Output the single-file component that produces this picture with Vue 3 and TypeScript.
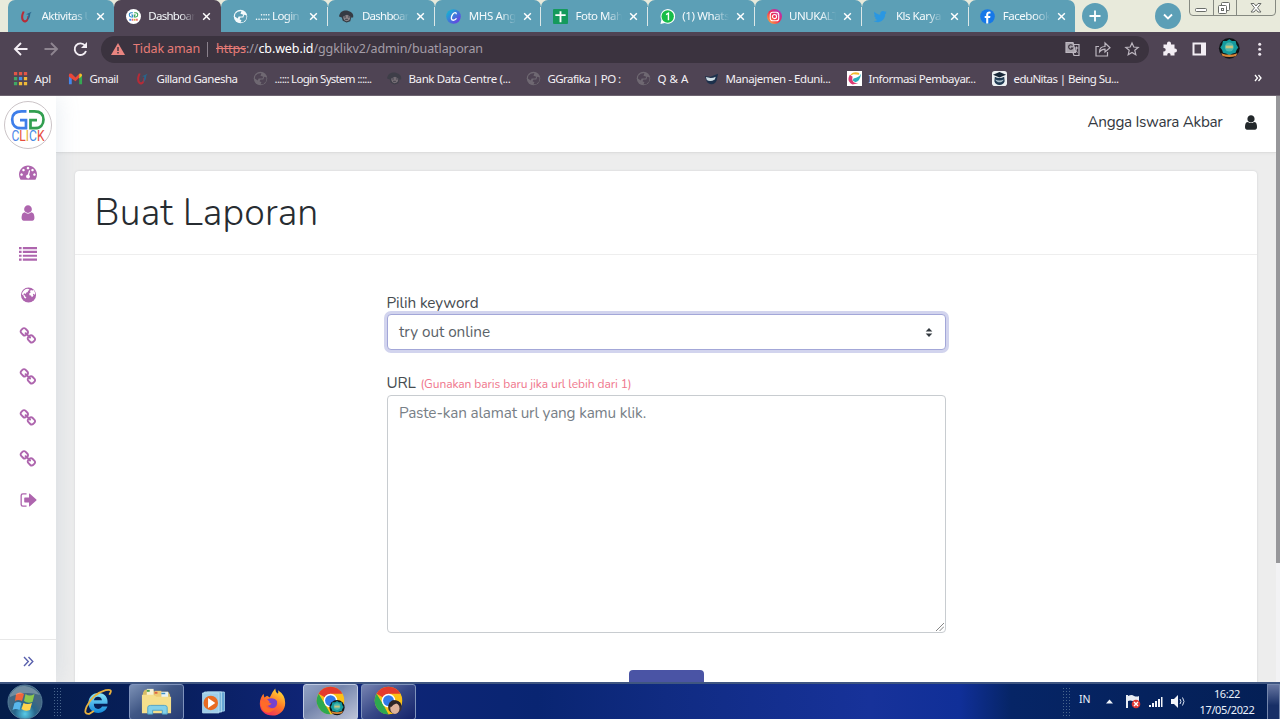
<script setup lang="ts">
interface Item { icon: string; label: string; width: number }

const globe = '<circle cx="8" cy="8" r="7.200" fill="currentColor"/><path d="M2.500 5l2.500-2 4-1-1 3 3 1-1 2-4 0-1 2-3-2zM8 9l3 0 1-3 2.500 1-.5 4-3 3-3 0 1-2-2-1z" fill="var(--hole)"/>'
const face = '<path d="M0 8C1 2 6 1 10 2c4 1 6 4 5 7l-2 0-1 4-4 1.500-4-2L3 9z" fill="#353b43"/><path d="M4.500 8l4-2 3.500 2c0 3-1 5-4 5-2 0-3.500-2-3.500-5z" fill="#8c8588"/><path d="M5.500 8.500h2M9.500 8.500h2M6.500 11h3" stroke="#353b43"/>'
const swirl = '<path d="M4 2.500C1 8 2 13.500 6 14.500c3 0 4.500-3 4.500-6.500L9 7.500c0 3-1.500 5-3 4.500C4 11 4 7 6 3z" fill="#b72b37"/><path d="M7.500 5.500l6-2.500-1.500 2c0 3-1 5.500-3 7l1-6z" fill="#28658d"/>'
const chrome = '<circle cx="16" cy="16" r="15" fill="#fbc116"/><path d="M16 16L3 8.500A15 15 0 0 1 29 8.500H16z" fill="#e33b2e"/><path d="M3 8.500L10 20l6 11A15 15 0 0 1 3 8.500z" fill="#2da94f"/><path d="M16 9h13A15 15 0 0 1 16 31l6-12z" fill="#fbc116"/><circle cx="16" cy="16" r="7.500" fill="#fff"/><circle cx="16" cy="16" r="5.900" fill="#317bea"/>'
const emblem = '<circle cx="12" cy="12" r="11.500" fill="#101517"/><path d="M12 2l3 2 4 0 1 4 2 3-2 3-1 3-4 1-3 2-3-2-4-1-1-3-2-3 2-3 1-4 4 0z" fill="#159b9d"/><circle cx="12" cy="10.500" r="5" fill="#4bb7ad"/><path d="M8 9h8v3H8z" fill="#c8c47c"/><path d="M3 17.500q9 3.500 18 0l-1.500 3q-7.500 2.500-15 0z" fill="#d88739"/>'

const art: Record<string, string> = {
  swirl, face, globe,
  gg: '<circle cx="8" cy="8" r="8" fill="#fff"/><path d="M7.300 4H5.500Q3.500 4 3.500 6.200T5.500 8.500h1.600V6.300H5.600" fill="none" stroke="#2789c9" stroke-width="1.100"/><path d="M8.700 4h1.800q2 0 2 2.200t-2 2.300H8.900V6.300h1.500" fill="none" stroke="#38a455" stroke-width="1.100"/><path d="M3.500 11.500h2.200" stroke="#4285f4" stroke-width="2"/><path d="M6.300 11.500h1.500M10.800 11.500h1.700" stroke="#e66" stroke-width="2"/><path d="M8.400 11.500h1.800" stroke="#dab03a" stroke-width="2"/>',
  canva: '<circle cx="8" cy="8" r="7.800" fill="url(#canva)"/><path d="M11 5.500c0-2.200-2-2.200-3.800 0-2.200 3-2 6.500.5 6.500q2 0 3.500-2" fill="none" stroke="#fff" stroke-width="1.400"/>',
  sheet: '<rect width="16" height="16" rx="1" fill="#159a5c"/><path d="M8 2.500v11.500M2.500 6.500h11" stroke="#fff" stroke-width="2"/>',
  whats: '<path d="M.5 16L1.500 11.500A7.800 7.800 0 1 1 5 14.900z" fill="#fff"/><circle cx="8.200" cy="8" r="6.600" fill="#17bd48"/><path d="M6.500 6L9 4.500V12" fill="none" stroke="#fff" stroke-width="1.500"/>',
  insta: '<circle cx="8" cy="8" r="8" fill="url(#insta)"/><rect x="3.500" y="3.500" width="9" height="9" rx="2.500" fill="none" stroke="#fff" stroke-width="1.200"/><circle cx="8" cy="8" r="2.200" fill="none" stroke="#fff" stroke-width="1.200"/><circle cx="10.700" cy="5.300" r=".6" fill="#fff"/>',
  bird: '<path d="M14.500 4.200L13 5.400c.1 5-3.500 8.600-8 8.600-1.700 0-3.200-.4-4.200-1.200 1.500 0 2.900-.4 4-1.200-1.200-.1-2.200-.9-2.600-2h1.200C2 9 1.200 7.800 1.200 6.600l1.200.3C1.100 5.900.8 4.200 1.600 3 3.200 4.900 5.300 6 7.800 6.100 7.300 3.800 8.800 2 10.700 2c.9 0 1.600.3 2.100.9l1.700-.6-1.100 1.600z" fill="#2a97e2"/>',
  fb: '<circle cx="8" cy="8" r="7.800" fill="#1678e8"/><path d="M8.800 15.500V9.600h2l.3-2.200H8.800V6c0-.8.300-1.100 1.200-1.100h1.200v-2Q7 2 6.600 5.400v2H5v2.200h1.600v5.900z" fill="#fff"/>',
  apps: '<path d="M1 1h3.500v3.500H1zM6.300 1h3.500v3.500H6.300zM11.600 1h3.500v3.500h-3.500z" fill="#e15647"/><path d="M1 6.300h3.500v3.500H1zM1 11.600h3.500v3.500H1z" fill="#40a865"/><path d="M6.300 6.300h3.500v3.500H6.300z" fill="#4390e8"/><path d="M11.600 6.300h3.500v3.500h-3.500zM6.300 11.600h3.500v3.500H6.300zM11.600 11.600h3.500v3.500h-3.500z" fill="#f0ba38"/>',
  gmail: '<path d="M1 4v10h3V7z" fill="#4487ed"/><path d="M12 7v7h3V4z" fill="#36a853"/><path d="M1 4q0-2 3-1l4 4 4-4v4l-4 4-7-5z" fill="#e94739"/><path d="M12 3q3-1 3 2l-3 3z" fill="#f7bd29"/>',
  mask: '<path d="M1 5.500l6 .5 8-3-1.500 7q-2 4.500-6 4-4-.5-5-4z" fill="#1c304b"/><path d="M2 6.500q6 2 10.500-.5l-1 3q-5 3-8.500.5z" fill="#cfdee4"/>',
  info: '<path d="M0 0h16v16H0z" fill="#fff"/><path d="M13 2Q6 0 3 5l4-1.500 6 .5z" fill="#f2b92d"/><path d="M3 4q-4 7 3 10.500l6-1.500Q4 13 6 6z" fill="#dc3972"/><path d="M7 8q6-1 8-5-1 8-6 9l-3-2z" fill="#2bb1bb"/>',
  edu: '<rect width="16" height="16" rx="3" fill="#eef1f3"/><path d="M1 4l7-3 7 3-7 3z" fill="#172637"/><path d="M3 6q5 3 10 0l.5 5q-1.500 4-5.500 4t-5.500-4z" fill="#213b53"/><path d="M3.500 9q4.500 2 9 0-1 3-4.500 3T3.500 9z" fill="#a9bdc9"/>',
}

const tabs: Item[] = [
  { icon: 'swirl', label: 'Aktivitas U', width: 51 }, { icon: 'gg', label: 'Dashboard', width: 53 },
  { icon: 'globe', label: '..:::: Login S', width: 52 }, { icon: 'face', label: 'Dashboard', width: 53 },
  { icon: 'canva', label: 'MHS Angg', width: 54 }, { icon: 'sheet', label: 'Foto Maha', width: 53 },
  { icon: 'whats', label: '(1) Whats', width: 47 }, { icon: 'insta', label: 'UNUKALT', width: 49 },
  { icon: 'bird', label: 'Kls Karya', width: 45 }, { icon: 'fb', label: 'Facebook', width: 48 },
]
const bookmarks: Item[] = [
  { icon: 'apps', label: 'Apl', width: 16.5 }, { icon: 'gmail', label: 'Gmail', width: 28.5 },
  { icon: 'swirl', label: 'Gilland Ganesha', width: 81 }, { icon: 'globe', label: '..:::: Login System ::::..', width: 97 },
  { icon: 'face', label: 'Bank Data Centre (...', width: 102 }, { icon: 'globe', label: 'GGrafika | PO :', width: 73 },
  { icon: 'globe', label: 'Q & A', width: 31 }, { icon: 'mask', label: 'Manajemen - Eduni...', width: 105 },
  { icon: 'info', label: 'Informasi Pembayar...', width: 107 }, { icon: 'edu', label: 'eduNitas | Being Su...', width: 105 },
]

const userPath = 'M1280 1399q0 109-62.500 187t-150.500 78h-854q-88 0-150.500-78t-62.500-187q0-85 8.500-160.500t31.500-152 58.500-131 94-89 134.500-34.500q131 128 313 128t313-128q76 0 134.500 34.500t94 89 58.500 131 31.500 152 8.500 160.500zm-256-887q0 159-112.500 271.500t-271.500 112.500-271.500-112.500-112.500-271.500 112.500-271.500 271.500-112.500 271.500 112.500 112.500 271.500z'
const dot = 'q0-53-37.500-90.500t-90.500-37.500-90.500 37.500-37.500 90.500 37.500 90.500 90.500 37.500 90.500-37.500 37.500-90.500z'
const linkPath = 'M1456 1216q0-40-28-68l-208-208q-28-28-68-28-42 0-72 32 3 3 19 18.500t21.500 21.500 15 19 13 25.500 3.500 27.500q0 40-28 68t-68 28q-15 0-27.500-3.500t-25.500-13-19-15-21.500-21.500-18.500-19q-33 31-33 73 0 40 28 68l206 207q27 27 68 27 40 0 68-26l147-146q28-28 28-67zm-703-705q0-40-28-68l-206-207q-28-28-68-28-39 0-68 27l-147 146q-28 28-28 67 0 40 28 68l208 208q27 27 68 27 42 0 72-31-3-3-19-18.500t-21.500-21.500-15-19-13-25.500-3.500-27.500q0-40 28-68t68-28q15 0 27.500 3.500t25.500 13 19 15 21.500 21.500 18.500 19q33-31 33-73zm895 705q0 120-85 203l-147 146q-83 83-203 83-121 0-204-85l-206-207q-83-83-83-203 0-123 88-209l-88-88q-86 88-208 88-120 0-204-84l-208-208q-84-84-84-204t85-203l147-146q83-83 203-83 121 0 204 85l206 207q83 83 83 203 0 123-88 209l88 88q86-88 208-88 120 0 204 84l208 208q84 84 84 204z'
const link = `<path d="${linkPath}"/>`
const menu: string[] = [
  `<path d="M384 1152${dot}M576 704${dot}M1004 1185l101-382q6-26-7.500-48.500t-38.500-29.500-48 6.500-30 39.500l-101 382q-60 5-107 43.500t-63 98.500q-20 77 20 146t117 89 146-20 89-117q16-60-6-117t-72-91zM1664 1152${dot}M1024 512${dot}M1472 704${dot}M1792 1152q0 261-141 483-19 29-54 29H195q-35 0-54-29Q0 1414 0 1152q0-182 71-348t191-286 286-191 348-71 348 71 286 191 191 286 71 348z"/>`,
  `<path transform="translate(256)" d="${userPath}"/>`,
  '<path d="M0 192h256v220H0zm384 0h1408v220H384zM0 576h256v220H0zm384 0h1408v220H384zM0 960h256v220H0zm384 0h1408v220H384zM0 1344h256v220H0zm384 0h1408v220H384z"/>',
  '<circle cx="896" cy="896" r="800"/><path fill="#fff" d="M430 400q180-150 400-150l160 60-50 110-120 20 20 130-170 60-70 170-120-80-110 60 20 130 120 20 30 130 130 60-60 140-140-60-120-260-160-130q60-240 240-410zM1150 380l160 40 130-40 130 230 30 220-80 40-60-100-100 60 60 140-170 170-90-180-160-40-30-170 150-120-60-120z"/>',
  link, link, link, link,
  '<path d="M700 220H330Q100 220 100 450v890q0 230 230 230h370v-130H350q-120 0-120-120V470q0-120 120-120h350z"/><path d="M530 650h420V300q0-90 85-30l640 570q55 55 0 110l-640 570q-85 60-85-30v-350H530q-60 0-60-60V710q0-60 60-60z"/>',
]

const vFit = {
  mounted(el: HTMLElement, binding: { value: number }) {
    const count = (el.textContent ?? '').trim().length
    const natural = el.getBoundingClientRect().width
    el.style.letterSpacing = `${(binding.value - natural) / count}px`
  },
}
</script>

<template>
  <div class="screen">
    <svg class="defs"><defs>
      <linearGradient id="canva" x2="1" y2="1"><stop stop-color="#08c4d1" /><stop offset="1" stop-color="#752ee5" /></linearGradient>
      <linearGradient id="insta" x1="0" y1="1" x2="1" y2="0"><stop stop-color="#ffc33c" /><stop offset=".5" stop-color="#ef2b55" /><stop offset="1" stop-color="#9b35dc" /></linearGradient>
      <radialGradient id="orb" cy=".85"><stop stop-color="#59cce8" /><stop offset=".6" stop-color="#27668b" /><stop offset="1" stop-color="#426782" /></radialGradient>
      <linearGradient id="fire" x1=".8" x2=".2" y2="1"><stop stop-color="#ffe536" /><stop offset=".5" stop-color="#ff7527" /><stop offset="1" stop-color="#ef2763" /></linearGradient>
      <linearGradient id="ie" x2="0" y2="1"><stop stop-color="#8be6fb" /><stop offset="1" stop-color="#1288d8" /></linearGradient>
    </defs></svg>

    <header class="browser">
      <div class="tabstrip">
        <div v-for="(t, i) in tabs" :key="i" class="tab" :class="{ active: i === 1, divided: i > 1 && i < 9 }">
          <svg class="fav" viewBox="0 0 16 16" v-html="art[t.icon]" />
          <div class="tabtext"><span v-fit="t.width">{{ t.label }}</span></div>
          <svg class="close" viewBox="0 0 10 10"><path d="M1.300 1.300l7.400 7.400M8.700 1.300L1.300 8.700" /></svg>
        </div>
        <div class="round plus"><svg viewBox="0 0 26 26"><path d="M13 7.500v11M7.500 13h11" /></svg></div>
        <div class="round down"><svg viewBox="0 0 26 26"><path d="M9 11.500l4 4 4-4" /></svg></div>
        <div class="winbtns">
          <svg viewBox="0 0 87 16"><path d="M.5 0v12q0 3.500 3.500 3.500h79q3.500 0 3.500-3.500V0M24.500 0v15M47.500 0v15" fill="none" stroke="#858981" /><g fill="#fff" stroke="#696d69"><rect x="6.500" y="8.500" width="11" height="3" rx="1" /><rect x="32.500" y="2.500" width="8" height="8" rx="1" /><rect x="29.500" y="5.500" width="8" height="8" rx="1" /><rect x="32.500" y="8.500" width="2" height="2" /><path d="M62 3.500h3l2 2.500 2-2.500h3L68.500 7.800 72 12h-3l-2-2.500L65 12h-3l3.500-4.200z" /></g></svg>
        </div>
      </div>

      <div class="toolbar">
        <svg class="nav" viewBox="0 0 100 34" fill="none" stroke-width="1.900"><path d="M27 17H15M20.500 11l-6 6 6 6" stroke="#f4eff5" /><path d="M44 17h12M50.500 11l6 6-6 6" stroke="#8e8590" /><path d="M84.500 13.500A5.800 5.800 0 1 0 85.500 19" stroke="#f4eff5" /><path d="M86.500 10v6h-6z" fill="#f4eff5" /></svg>
        <div class="omnibox">
          <svg class="warn" viewBox="0 0 14 12"><path d="M7 0l7 12H0z" fill="#ea8580" /><path d="M7 4v4M7 9v1.500" stroke="#3b333f" stroke-width="1.400" /></svg>
          <span v-fit="67" class="danger">Tidak aman</span><i class="bar" />
          <div class="url"><span v-fit="267"><s>https</s><em>://</em><b>cb.web.id</b><em>/ggklikv2/admin/buatlaporan</em></span></div>
          <svg class="actions" viewBox="0 0 76 18" fill="none" stroke="#bdb7c0" stroke-width="1.200"><path d="M1 2.500h7l2.500 10H1z" fill="#a9a4ac" /><path d="M8.500 4.500h5.500v11H9l-1-3" /><path d="M7.500 5.500a2.200 2.200 0 1 0 .3 2.500H6" stroke="#3b333f" /><path d="M9.500 8h4M11.500 6.500V8c0 1.500-.5 3-1.500 4m0-2.500l2.500 3" stroke-width="1" /><path d="M34 6.500h-3v9.500h11.500v-4M34.500 12q0-5.500 5.500-5.500V3l5 4.700-5 4.300V9.200q-3.500 0-5.500 2.800z" /><path d="M67 3l1.800 4 4.400.4-3.400 2.900 1 4.400L67 12.400l-3.800 2.300 1-4.400-3.400-2.900 4.400-.4z" /></svg>
        </div>
        <svg class="tools" viewBox="0 0 120 34"><path d="M14.500 12.500H18V11.500a2 2 0 0 1 4 0v1h3.500v4h.5a2 2 0 0 1 0 4h-.5V23.500H21.500v-1a1.600 1.600 0 0 0-3.200 0v1h-4v-4h.7a1.700 1.700 0 0 0 0-3.400h-.5z" fill="#f3eef4" /><path d="M43.500 10.500H57v13H43.500z" fill="#f3eef4" /><path d="M45.500 12.500h6.500v9h-6.500z" fill="#4d4351" /><g transform="translate(69.500 5.500) scale(.9)" v-html="emblem" /><g fill="#eee8ef"><circle cx="110.700" cy="12.300" r="1.500" /><circle cx="110.700" cy="17.300" r="1.500" /><circle cx="110.700" cy="22.300" r="1.500" /></g></svg>
      </div>

      <nav class="bookmarks">
        <div v-for="(b, i) in bookmarks" :key="i" class="bookmark" :class="'bm-' + b.icon">
          <svg viewBox="0 0 16 16" v-html="art[b.icon]" /><span v-fit="b.width">{{ b.label }}</span>
        </div>
        <svg class="more" viewBox="0 0 8 8"><path d="M1 1l2.500 3L1 7M4.500 1L7 4 4.500 7" /></svg>
      </nav>
    </header>

    <div class="page">
      <aside class="sidebar">
        <svg class="logo" viewBox="0 0 48 48"><circle cx="24" cy="24" r="23.500" fill="#fff" stroke="#cbc4c7" /><g fill="none" stroke-width="2.700"><path d="M22.500 10.300H17.500C11 10.300 8.200 13.500 8.200 18.500S11 27.200 17 27.200h5v-8h-6" stroke="#3d7eea" /><path d="M25 10.300h5.500c6 0 9 3.200 9 8.200S36.500 27.200 31 27.200h-4.500v-8H33" stroke="#329f50" /></g><text y="40" font-size="14" font-family="Roboto, sans-serif" textLength="33" lengthAdjust="spacingAndGlyphs" x="7.500"><tspan fill="#4c86e8">C</tspan><tspan fill="#e74c40">L</tspan><tspan fill="#e7b12f">I</tspan><tspan fill="#458be3">C</tspan><tspan fill="#e64b41">K</tspan></text></svg>
        <div class="menu"><div v-for="(m, i) in menu" :key="i" class="entry"><svg viewBox="0 0 1792 1792" v-html="m" /></div></div>
        <div class="expand"><svg viewBox="0 0 11 11"><path d="M1 1l4.300 4.500L1 10M5.500 1l4.300 4.500L5.500 10" /></svg></div>
      </aside>
      <main class="content">
        <div class="topbar"><span v-fit="135">Angga Iswara Akbar</span><svg viewBox="0 0 1280 1792"><path :d="userPath" /></svg></div>
        <section class="card">
          <h1><span v-fit="224">Buat Laporan</span></h1>
          <form>
            <label><span v-fit="92">Pilih keyword</span></label>
            <div class="select"><span v-fit="91">try out online</span><svg viewBox="0 0 8 10"><path d="M4 0l3.700 4H.3zM4 10L.3 6h7.400z" /></svg></div>
            <label class="urlabel"><span v-fit="29">URL</span><small v-fit="211">(Gunakan baris baru jika url lebih dari 1)</small></label>
            <div class="area"><span v-fit="247">Paste-kan alamat url yang kamu klik.</span><svg viewBox="0 0 9 9"><path d="M0 9l9-9M4 9l5-5" /></svg></div>
            <div class="submit" />
          </form>
        </section>
      </main>
      <div class="scroll"><div /></div>
    </div>

    <footer class="taskbar">
      <svg class="start" viewBox="0 0 36 36"><circle cx="18" cy="18" r="17" fill="url(#orb)" stroke="#557c98" /><path d="M9 10q4-3 8 0l-2 7q-4-2-7 0z" fill="#ef653b" /><path d="M18.500 10q4 3 9 0l-2 8q-5 2-8.500-1z" fill="#8bc64e" /><path d="M7.500 19q4-2 7 0l-2 7q-4-2-7 0z" fill="#58b7ed" /><path d="M16.500 19q4 2 8.500 0l-2 7q-5 2-8.500-1z" fill="#ffd34d" /><path d="M3 11Q9 1 18 2t15 9q-15-5-30 2z" fill="#fff" opacity=".25" /></svg>
      <i class="grip" />
      <div class="app ie"><svg viewBox="0 0 32 32"><path d="M27 18H12c0 7 7 7 9 3h6c-2 5-6 7-10 7C10 28 6 23 6 17S10 6 17 6s11 5 10 12zm-6-4c-1-5-8-5-9 0z" fill="url(#ie)" /><path d="M29 8Q34 1 25 3 11 7 4 21q-4 9 3 8l5-3" fill="none" stroke="#e8b13e" stroke-width="2" /></svg></div>
      <div class="app open"><svg viewBox="0 0 34 32"><path d="M3 7l2-3h8l2 2h14l2 3v18H3z" fill="#d7bd65" /><path d="M7 3h7v9H7z" fill="#f6f1d5" /><path d="M15 5h7v9h-7z" fill="#edcc74" /><path d="M22 6h7v9h-7z" fill="#e7f2f4" /><path d="M7 4h3v2H7z" fill="#49a249" /><path d="M15 6h3v2h-3z" fill="#dc6543" /><path d="M22 7h4v1.500h-4z" fill="#3f90c4" /><path d="M2 9h12l3 2h15v17H2z" fill="#f5df8c" /><path d="M8 29v-7q0-2 3-2h14q3 0 3 2v7h-5v-4H13v4z" fill="#82d0e9" stroke="#51a4c7" /></svg></div>
      <div class="app player"><svg viewBox="0 0 32 32"><path d="M9 5h19v21H9z" fill="#5a9fd0" stroke="#a8d5ee" /><path d="M6 5h19v22H6z" fill="#79b6dc" stroke="#badff1" /><path d="M4 6h18v22H4z" fill="#9fcde8" stroke="#b7def2" /><circle cx="13" cy="17" r="8" fill="#e96b22" /><path d="M10 11.500l8 5.500-8 5.500z" fill="#fff" /></svg></div>
      <div class="app"><svg viewBox="0 0 32 32"><path d="M19 1q0 4 3 6 1-2 0-4 8 5 8 14c0 8-6 14-14 14S2 26 2 18c0-5 2-8 4-11l1 4 3-2 3 2q3-7 6-10z" fill="url(#fire)" /><path d="M10 13q8-3 11 2 1 7-5 8-5-1-6-5l3-2z" fill="#7542ce" /><path d="M3 14q3 0 5 2 5 0 7 2-3 3-6 2 3 5 10 3Q12 31 6 26q-4-5-3-12z" fill="#ff6b28" /></svg></div>
      <div class="app open bright"><svg viewBox="0 0 36 36"><g transform="translate(2 1)" v-html="chrome" /><g transform="translate(16.500 16) scale(.72)" v-html="emblem" /></svg></div>
      <div class="app open last"><svg viewBox="0 0 36 36"><g transform="translate(2 1)" v-html="chrome" /><circle cx="25" cy="24" r="7.500" fill="#403331" /><ellipse cx="25" cy="25.500" rx="5" ry="6" fill="#ddb29b" /><path d="M18 23q2-8 8-6 6 1 6 7l-5-4q-4 1-6 4z" fill="#2c2425" /></svg></div>
      <div class="space" />
      <i class="grip" />
      <div class="lang">IN</div>
      <svg class="tray" viewBox="0 0 84 18"><path d="M3 10.500l3.500-4 3.500 4z" fill="#eef3fa" /><path d="M23 2h2v13h-2zM25 3q4-2 6 0 3 1 5 0v6q-4 1-6-1-3-1-5 0z" fill="#e8edf5" /><circle cx="33" cy="11" r="4.300" fill="#df3834" /><path d="M31 9l4 4m0-4l-4 4" stroke="#fff" stroke-width="1.400" /><path d="M46 12h2v2h-2zM49 10h2v4h-2zM52 8h2v6h-2zM55 6h2v8h-2zM58 4h1.500v10H58z" fill="#f3f5fa" /><path d="M68 6h3l4-4v13l-4-4h-3z" fill="#f3f5fa" /><path d="M77 6q2 2.500 0 5M79.500 4.500q3 4 0 8" fill="none" stroke="#dbe4f2" /></svg>
      <div class="clock"><span v-fit="26">16:22</span><span v-fit="55">17/05/2022</span></div>
      <div class="peek" />
    </footer>
  </div>
</template>

<style>
body { margin: 0; overflow: hidden; }
</style>

<style scoped>
* { box-sizing: border-box; }
.screen { position: relative; width: 1280px; height: 719px; display: flex; flex-direction: column; overflow: hidden; background: #ededed; font-family: "Noto Sans", "Open Sans", sans-serif; }
.screen svg { display: block; flex: none; }
.screen span, .screen small { white-space: nowrap; }
.defs { position: absolute; width: 0; height: 0; }
.browser { height: 96px; flex: none; background: #4f4454; border-bottom: 1px solid #6d6470; }
.tabstrip { display: flex; height: 32px; padding-left: 7.500px; background: #e8eadb; }
.tab { --hole: #5c9eb5; position: relative; width: 106.800px; height: 32px; flex: none; display: flex; align-items: center; padding-left: 11.500px; background: #5c9fb6; border-radius: 7px 7px 0 0; color: #f5fafc; font-size: 11.500px; }
.tab.active { background: #4f4454; }
.tab.divided::after { content: ""; position: absolute; right: 0; top: 7px; width: 1px; height: 19px; background: #dce8e8; }
.fav { width: 15px; height: 15px; }
.tabtext { width: 48px; height: 20px; margin-left: 7.500px; line-height: 20px; overflow: hidden; mask-image: linear-gradient(90deg, #000 66%, transparent 98%); }
.tabtext span { display: inline-block; }
.close { width: 9px; height: 9px; margin-left: 6px; fill: none; stroke: #fff; stroke-width: 1.600; }
.round { width: 26px; height: 26px; margin-top: 3px; border-radius: 50%; background: #5c9fb6; }
.round svg { fill: none; stroke: #fff; stroke-width: 1.800; }
.plus { margin-left: 7px; }
.down { margin-left: 47px; }
.winbtns { width: 87px; margin-left: 7.500px; }
.toolbar { display: flex; height: 33px; }
.nav { width: 101px; height: 34px; }
.omnibox { display: flex; align-items: center; width: 1048px; height: 27px; margin-top: 3.500px; padding-left: 10px; border-radius: 14px; background: #3b333f; font-size: 12.500px; line-height: 16px; }
.warn { width: 14px; height: 12px; margin-right: 8px; }
.danger { color: #e77c77; }
.bar { width: 1px; height: 15px; margin: 0 8px 0 7px; background: #8a818c; }
.url { color: #e77c77; }
.url em { color: #a49da7; font-style: normal; }
.url b { color: #fff; font-weight: 400; }
.actions { width: 76px; height: 18px; margin-left: auto; margin-right: 8px; }
.tools { width: 120px; height: 34px; }
.bookmarks { --hole: #4f4454; position: relative; display: grid; grid-template-columns: 55px 67px 118px 134px 139px 110px 68px 143px 145px 140px; height: 26px; padding-left: 12.500px; color: #f4f1f5; font-size: 11.500px; }
.bookmark { display: flex; align-items: center; gap: 7px; min-width: 0; }
.bookmark svg { width: 15px; height: 15px; }
.bm-globe svg { color: #77727a; opacity: .8; }
.bm-face svg { opacity: .65; }
.more { position: absolute; right: 18px; top: 9px; width: 8px; height: 8px; fill: none; stroke: #fff; stroke-width: 1.300; }
.page { position: relative; display: flex; height: 586px; overflow: hidden; }
.sidebar { position: relative; z-index: 1; width: 56px; display: flex; flex-direction: column; align-items: center; background: #fff; box-shadow: 0 0 24px rgba(120, 150, 180, .2); }
.logo { width: 48px; height: 48px; margin-top: 5px; }
.menu { display: flex; flex-direction: column; padding-top: 2px; }
.entry { height: 41.100px; display: flex; align-items: center; justify-content: center; }
.entry svg { width: 18px; height: 18px; fill: #ae65ae; }
.entry:nth-child(n + 4) svg { width: 19px; }
.entry:nth-child(4) svg { width: 17px; }
.expand { width: 56px; height: 43px; margin-top: auto; display: flex; align-items: center; justify-content: center; padding-top: 1px; border-top: 1px solid #e8e8e8; }
.expand svg { width: 11px; height: 11px; fill: none; stroke: #5960ad; stroke-width: 1.400; }
.content { width: 1220px; flex: none; font-family: Nunito, "Noto Sans", sans-serif; color: #464c51; }
.topbar { height: 57px; display: flex; align-items: center; justify-content: flex-end; padding: 0 19px 4px; background: #fff; border-bottom: 1px solid #dedede; box-shadow: 0 1px 3px #0000000a; font-size: 15.300px; color: #333840; }
.topbar svg { width: 12px; height: 17px; margin-left: 22.500px; fill: #23282b; }
.card { width: 1182px; height: 560px; margin: 18px 0 0 19px; border-radius: 4px; background: #fff; box-shadow: 0 0 2px #c8cbce; }
h1 { height: 84px; margin: 0; padding: 0 19.500px; border-bottom: 1px solid #eee; color: #272c31; font-weight: 350; font-size: 37.500px; line-height: 83px; }
form { width: 559px; margin: 0 auto; padding-top: 36px; position: relative; display: flex; flex-direction: column; }
label { height: 24px; font-size: 15.300px; line-height: 24px; }
.select, .area { position: relative; border: 1px solid #c8ccd0; border-radius: 4px; padding-left: 11.500px; font-size: 15.300px; background: #fff; }
.select { height: 36px; margin-top: -1px; line-height: 34px; border-color: #a3a7d8; box-shadow: 0 0 0 3px #d2d4ee; color: #5b6369; }
.select svg { position: absolute; right: 11.500px; top: 13px; width: 8px; height: 9px; fill: #343a40; }
.urlabel { display: flex; margin-top: 21px; }
.urlabel small { margin-left: 5px; color: #ef758c; font-size: 12px; line-height: 26px; }
.area { height: 238px; padding-top: 5px; line-height: 24px; color: #788087; }
.area svg { position: absolute; right: 1px; bottom: 1px; width: 8px; height: 8px; fill: none; stroke: #777; }
.submit { align-self: center; width: 75px; height: 38px; margin-top: 37px; border-radius: 4px; background: #4a54a5; }
.scroll { width: 4px; background: #f2f2f4; }
.scroll div { height: 467px; background: #97979a; }
.taskbar { position: relative; display: flex; align-items: center; height: 37px; background: linear-gradient(90deg, #041d4a 0, #071e5a 12%, #102578 25%, #092572 42%, #102b82 52%, #17329a 68%, #102f98 75%, #062566 79%, #041f55 100%); border-top: 2px solid #3f5681; color: #eaf1fb; }
.start { width: 36px; height: 36px; margin-left: 7px; }
.grip { width: 8px; height: 29px; margin-left: 10px; background: radial-gradient(#48658c 0 .7px, transparent 1px) 0 0 / 3px 3px; }
.app { width: 55px; height: 36px; display: flex; align-items: center; justify-content: center; margin-left: 3px; }
.app svg { width: 29px; height: 30px; }
.ie { margin-left: 10px; padding-right: 2px; }
.player { padding-right: 2px; }
.open { border: 1px solid #7f93bc; border-radius: 3px; background: linear-gradient(145deg, #7c91b6 0%, #405785 45%, #263c74 100%); }
.bright { background: linear-gradient(145deg, #92a2c4, #7585ac 40%, #bdc4d8); border-color: #bfcae2; }
.last { background: linear-gradient(145deg, #7783b1, #374887 50%, #14236a); }
.open svg { width: 33px; height: 33px; }
.space { flex: 1; }
.lang { width: 20px; margin-left: 9px; padding-bottom: 6px; font-size: 10.500px; }
.tray { width: 84px; height: 18px; margin-left: 4px; }
.clock { width: 60px; height: 36px; margin-left: 10px; display: flex; flex-direction: column; align-items: center; justify-content: center; font-size: 11px; line-height: 15.500px; }
.peek { width: 13px; height: 36px; margin-left: 10px; border: 1px solid #7587ad; background: linear-gradient(#6676a1, #182f66 60%); }
</style>
